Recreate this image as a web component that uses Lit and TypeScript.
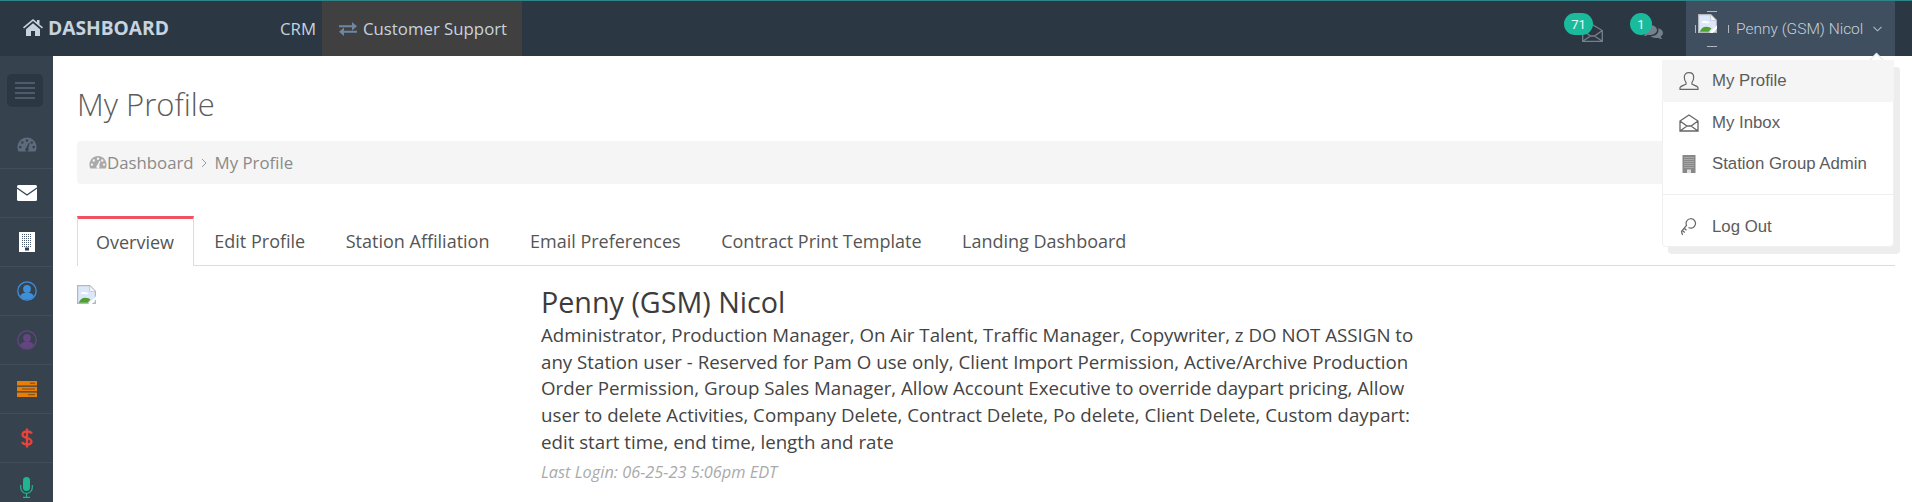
import { LitElement, html, css, svg } from "lit";
import { customElement } from "lit/decorators.js";

const broken = (s: number) => html`<svg class="broken" width=${s} height=${s} viewBox="0 0 16 16">
  <path d="M0 0H11L16 5V16H0Z" fill="#b4b8bd"/>
  <path d="M1 1H10.500V5.500H15V15H1Z" fill="#dde7fa"/>
  <path d="M11 1 15 5H11Z" fill="#f4f4f4"/>
  <path d="M3 7.500c.8-1.800 2.500-2.200 3.500-1.300 1.800-.2 3 .5 3.200 1.500Z" fill="#fff"/>
  <path d="M1.500 15c.8-2.600 3-4.200 5.500-4.200 2 0 3.300.6 4.300 1.500L9 15Z" fill="#4f9f33"/>
  <path d="M9.500 16 16 9.500V12L12.500 16Z" fill="#fff"/>
</svg>`;

const gauge = (c: string) => svg`<path fill=${c} fill-rule="evenodd" d="M10 2.500C4.500 2.500.5 7 .5 12.200c0 1.600.4 3 1 4.300h17c.6-1.300 1-2.700 1-4.300C19.500 7 15.500 2.500 10 2.500ZM10 4.300a1.300 1.300 0 1 1 0 2.600 1.300 1.300 0 0 1 0-2.600ZM5.300 6.200a1.300 1.300 0 1 1 0 2.600 1.300 1.300 0 0 1 0-2.600ZM3.300 10.800a1.300 1.300 0 1 1 0 2.600 1.300 1.300 0 0 1 0-2.600ZM16.700 10.800a1.300 1.300 0 1 1 0 2.600 1.300 1.300 0 0 1 0-2.600ZM14.700 6.200a1.300 1.300 0 1 1 0 2.600 1.300 1.300 0 0 1 0-2.600ZM11.800 7.800 12.700 8.200 11.300 13.200a1.800 1.800 0 1 1-2.200-.300Z"/>`;

const user = (c: string, bg: string) => html`<svg width="20" height="20" viewBox="0 0 20 20">
  <circle cx="10" cy="10" r="9.200" fill=${bg} stroke=${c} stroke-width="1.300"/>
  <circle cx="10" cy="8" r="3.900" fill=${c}/>
  <path d="M3.200 15.500c.6-2.800 3-3.800 6.800-3.800s6.200 1 6.800 3.800a9 9 0 0 1-13.600 0Z" fill=${c}/>
</svg>`;

@customElement("app-root")
export class AppRoot extends LitElement {
  static styles = css`
    :host { display: block; width: 1912px; height: 502px; overflow: hidden; position: relative; background: #fff; font-family: "Open Sans", sans-serif; color: #444; }
    * { box-sizing: border-box; }
    svg { display: block; flex: none; }
    .topbar { height: 56px; background: #2c3744; border-top: 1px solid #2f8588; display: flex; align-items: stretch; color: #c7d3df; font-size: 16.800px; }
    .brand { width: 280px; padding: 0 0 3px 23px; display: flex; align-items: center; gap: 5px; font-weight: 700; font-size: 19.200px; }
    .crm { width: 42px; display: flex; align-items: center; padding-bottom: 1px; }
    .support { width: 200px; background: #404040; display: flex; align-items: center; padding-left: 17px; gap: 6px; }
    .spacer { flex: 1; }
    .msg { position: relative; width: 66px; }
    .msg.two { width: 56px; }
    .icon-in { position: absolute; left: 18px; top: 23px; }
    .icon-co { position: absolute; left: 13px; top: 24px; }
    .badge { position: absolute; left: 0; top: 12px; height: 22px; border-radius: 11px; background: #1abb9c; color: #e9f7f4; font-family: Roboto, sans-serif; font-size: 13px; display: flex; align-items: center; justify-content: center; }
    .b71 { width: 29px; }
    .b1 { width: 22px; }
    .userbox { width: 209px; margin-right: 17px; background: #3f4f60; display: flex; align-items: center; padding-left: 8px; color: #c5d0db; font-family: Roboto, sans-serif; font-weight: 300; font-size: 15.500px; }
    .avatar { width: 36px; height: 36px; position: relative; margin-right: 6px; }
    .avatar .broken { position: absolute; left: 4px; top: 3px; }
    .avatar .ring { position: absolute; left: 0; top: 0; }
    .uname { white-space: nowrap; }
    .chev { margin-left: 10px; }
    .main { display: flex; height: 446px; }
    .side { width: 53px; background: #37424f; flex: none; }
    .burger { height: 56px; padding: 18px 7px 0; }
    .burger div { width: 36px; height: 33px; background: #2c3744; border-radius: 5px; display: flex; align-items: center; justify-content: center; }
    .sitem { height: 49px; display: flex; align-items: center; justify-content: center; border-bottom: 1px solid #424d5a; padding-bottom: 1px; }
    .sitem.first { height: 57px; padding: 9px 0 0; }
    .sitem.mail { padding-bottom: 0; }
    .sitem.last { border: 0; }
    .content { flex: 1; padding: 0 17px 0 24px; min-width: 0; }
    h1 { margin: 0; font-weight: 300; font-size: 31px; line-height: 44px; padding: 26px 0 0; height: 85px; color: #5c5c5c; }
    .crumb { height: 43px; background: #f5f5f5; border-radius: 4px; display: flex; align-items: center; padding-left: 12px; font-size: 16.800px; color: #8a8a8a; }
    .crumb .sep { margin: 0 8px 0 7px; }
    .tabs { margin-top: 32px; height: 50px; display: flex; border-bottom: 1px solid #ddd; font-size: 18px; color: #555; }
    .tab { padding: 0 20.250px 1px; display: flex; align-items: center; margin-bottom: -1px; }
    .tab.on { border-top: 3px solid #ef5360; border-left: 1px solid #ddd; border-right: 1px solid #ddd; background: #fff; padding: 0 19px 1px 18px; }
    .profile { display: grid; grid-template-columns: 464px 880px; padding-top: 19px; }
    h2 { margin: -4px 0 0; font-weight: 400; font-size: 28.700px; line-height: 41px; color: #3c3c3c; }
    .roles { font-size: 18.720px; line-height: 26.670px; color: #444; margin: 0; }
    .login { font-style: italic; color: #aaa; font-size: 16.350px; margin-top: 6px; }
    .menu { position: absolute; left: 1662px; top: 60px; width: 232px; height: 187px; background: #fff; border: 1px solid #f0f0f0; border-radius: 4px; box-shadow: 6px 7px 0 #ededed; font-family: "Liberation Sans", sans-serif; font-size: 16.800px; color: #5c5c5c; display: flex; flex-direction: column; }
    .menu::before { content: ""; position: absolute; right: 11px; top: -6px; width: 10px; height: 10px; background: #fff; border: 1px solid #e6e6e6; border-right: 0; border-bottom: 0; transform: rotate(45deg); }
    .mi { height: 41px; flex: none; display: flex; align-items: center; padding-left: 16px; gap: 13px; }
    .mi.on { background: #f5f5f5; height: 42px; margin: -1px -1px 0; padding-left: 17px; position: relative; }
    hr { margin: 10px 0 11px; border: 0; border-top: 1px solid #eee; width: 100%; }
    .mi svg { width: 20px; }
  `;

  render() {
    const ic = "#666";
    return html`
      <div class="topbar">
        <div class="brand">
          <svg width="20" height="17" viewBox="0 0 20 17"><path fill="#c7d3df" d="M10 0 0 8.300l1 1.200L10 2l9 7.500 1-1.200-3.500-2.900V1h-2.500v2.300ZM3 10.200V17h5v-5h4v5h5v-6.800L10 4.200Z"/></svg>
          <span>DASHBOARD</span>
        </div>
        <div class="crm">CRM</div>
        <div class="support">
          <svg width="18" height="14" viewBox="0 0 18 14"><path fill="#6f86a3" d="M0 3.200h13V0l5 4.300-5 4.300V5.300H0ZM18 8.700H5V5.500L0 9.800 5 14v-3.200h13Z"/></svg>
          <span>Customer Support</span>
        </div>
        <div class="spacer"></div>
        <div class="msg">
          <svg class="icon-in" width="21" height="18" viewBox="0 0 21 18"><path fill="none" stroke="#76808c" stroke-width="1.300" d="M.7 6.500 10.500.8l9.800 5.700v10.800H.7ZM.7 6.500 8.500 12h4l7.800-5.500M.7 17.300 8.500 12M20.300 17.300 12.500 12"/></svg>
          <div class="badge b71">71</div>
        </div>
        <div class="msg two">
          <svg class="icon-co" width="20" height="16" viewBox="0 0 20 16"><path fill="#76808c" d="M7 0c3.800 0 7 2.200 7 5s-3.200 5-7 5c-.8 0-1.500-.1-2.200-.3C3.500 10.700 2 11 .8 11c.8-.7 1.400-1.500 1.600-2.400C.9 7.700 0 6.400 0 5c0-2.800 3.200-5 7-5Z"/><path fill="#76808c" d="M15.200 3.200C18 4 20 5.800 20 8c0 1.400-.9 2.700-2.400 3.600.2.900.8 1.800 1.600 2.400-1.200 0-2.700-.3-4-1.300-.7.200-1.400.3-2.200.3-2.200 0-4.200-.8-5.500-2 5.300.3 9-2.700 7.700-7.800Z"/></svg>
          <div class="badge b1">1</div>
        </div>
        <div class="userbox">
          <div class="avatar">
            <svg class="ring" width="36" height="36" viewBox="0 0 36 36"><path fill="none" stroke="#aeb9c4" stroke-width="1" d="M13 .5h10M1.500 14v8M34.500 14v8M13 35.500h10"/></svg>
            ${broken(19)}
          </div>
          <span class="uname">Penny (GSM) Nicol</span>
          <svg class="chev" width="9" height="6" viewBox="0 0 9 6"><path fill="none" stroke="#aeb9c4" stroke-width="1.100" d="M.5.800l4 4 4-4"/></svg>
        </div>
      </div>
      <div class="main">
        <div class="side">
          <div class="burger"><div><svg width="20" height="17" viewBox="0 0 20 17"><path stroke="#5b6878" stroke-width="1.500" d="M0 1h20M0 6h20M0 11h20M0 16h20"/></svg></div></div>
          <div class="sitem first"><svg width="20" height="20" viewBox="0 0 20 20">${gauge("#5d6b7d")}</svg></div>
          <div class="sitem mail"><svg width="20" height="16" viewBox="0 0 20 16"><rect width="20" height="16" rx="1.500" fill="#fff"/><path d="M0 3 10 10 20 3" fill="none" stroke="#37424f" stroke-width="1.300"/></svg></div>
          <div class="sitem"><svg width="16" height="20" viewBox="0 0 16 20"><rect width="16" height="20" fill="#fff"/><path stroke="#4a5a70" stroke-width="1" stroke-dasharray="1 1" d="M3 2.500h10M3 4.500h10M3 6.500h10M3 8.500h10M3 10.500h10M3 12.500h10M3 14.500h10"/><rect x="6" y="15.500" width="4" height="3" fill="#37424f"/></svg></div>
          <div class="sitem">${user("#3d8fd9", "#37424f")}</div>
          <div class="sitem">${user("#63457f", "#37424f")}</div>
          <div class="sitem"><svg width="20" height="16" viewBox="0 0 20 16"><path fill="#e87e04" d="M0 0h20v4.500H0ZM0 5.700h20v4.500H0ZM0 11.500h20V16H0Z"/><path stroke="#7a4a10" stroke-width="1" d="M13 2.200h5M5 8h13M11 13.700h7"/></svg></div>
          <div class="sitem"><svg width="12" height="20" viewBox="0 0 12 20"><path fill="none" stroke="#e9433c" stroke-width="2.300" d="M10.800 5.500C10 4 8 3.500 6 3.500 3.500 3.500 1.500 4.500 1.500 6.500c0 4.500 9 2.500 9 7 0 2-2 3-4.500 3-2.500 0-4.300-.8-5-2.500M6 .5v19"/></svg></div>
          <div class="sitem last"><svg width="13" height="21" viewBox="0 0 13 21"><rect x="3" y="0" width="7" height="14" rx="3.500" fill="#1fb58f"/><path fill="none" stroke="#1fb58f" stroke-width="1.200" d="M.7 8v2.500a5.800 5.800 0 0 0 11.600 0V8M6.500 16.500V20M3 20.400h7"/></svg></div>
        </div>
        <div class="content">
          <h1>My Profile</h1>
          <div class="crumb">
            <svg width="18" height="15" viewBox="0 2.500 20 14.500">${gauge("#aaa")}</svg>
            <span>Dashboard</span>
            <svg class="sep" width="6" height="10" viewBox="0 0 6 10"><path fill="none" stroke="#999" stroke-width="1" d="M1 1l4 4-4 4"/></svg>
            <span>My Profile</span>
          </div>
          <div class="tabs">
            <div class="tab on">Overview</div>
            <div class="tab">Edit Profile</div>
            <div class="tab">Station Affiliation</div>
            <div class="tab">Email Preferences</div>
            <div class="tab">Contract Print Template</div>
            <div class="tab">Landing Dashboard</div>
          </div>
          <div class="profile">
            <div>${broken(19)}</div>
            <div>
              <h2>Penny (GSM) Nicol</h2>
              <p class="roles">Administrator, Production Manager, On Air Talent, Traffic Manager, Copywriter, z DO NOT ASSIGN to any Station user - Reserved for Pam O use only, Client Import Permission, Active/Archive Production Order Permission, Group Sales Manager, Allow Account Executive to override daypart pricing, Allow user to delete Activities, Company Delete, Contract Delete, Po delete, Client Delete, Custom daypart: edit start time, end time, length and rate</p>
              <div class="login">Last Login: 06-25-23 5:06pm EDT</div>
            </div>
          </div>
        </div>
      </div>
      <div class="menu">
        <div class="mi on"><svg height="18" viewBox="0 0 20 18"><path fill="none" stroke=${ic} stroke-width="1.200" d="M1 17.300h18v-1.500c0-1.800-4-2.500-6-3.500v-2c1-1 1.700-2.500 1.700-5C14.700 2.500 13 .7 10 .7S5.300 2.500 5.300 5.300c0 2.500.7 4 1.700 5v2c-2 1-6 1.700-6 3.500Z"/></svg><span>My Profile</span></div>
        <div class="mi"><svg height="18" viewBox="0 0 20 18"><path fill="none" stroke=${ic} stroke-width="1.300" d="M1 7 10 1l9 6v10H1ZM1 7l7 5h4l7-5M1 17l7-5M19 17l-7-5"/></svg><span>My Inbox</span></div>
        <div class="mi"><svg height="18" viewBox="0 0 20 18"><rect x="3.500" width="13" height="18" fill="#888"/><path stroke="#c4c4c4" stroke-width="1" stroke-dasharray="1 1" d="M5.500 2.500h9M5.500 4.500h9M5.500 6.500h9M5.500 8.500h9M5.500 10.500h9M5.500 12.500h9"/><rect x="8" y="14.500" width="4" height="3.500" fill="#ddd"/></svg><span>Station Group Admin</span></div>
        <hr />
        <div class="mi"><svg height="18" viewBox="0 0 20 18"><path fill="none" stroke=${ic} stroke-width="1.200" d="M9.500 9.500a4.700 4.700 0 1 0-2-2.200L2.500 13.500l1 3.500M3.500 12.500l2.300 2M5.500 10.500l2 1.800"/></svg><span>Log Out</span></div>
      </div>
    `;
  }
}
